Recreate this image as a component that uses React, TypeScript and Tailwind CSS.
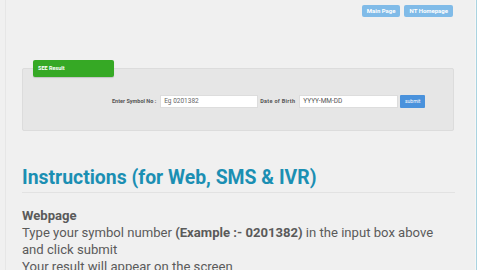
export default function App() {
  return (
    <div className="w-[480px] h-[270px] overflow-hidden bg-[#f0f0f0] flex font-['Roboto',sans-serif]">
      <div className="w-[470px] shrink-0 border-l border-[#e6e6e6] ml-[5px] pl-[16px] pr-[21px]">
        <div className="flex justify-end gap-[4px] pt-[5px] pr-[1px]">
          <span className="h-[12px] px-[5px] rounded-[2px] bg-[#80bbe8] text-white text-[6px] font-bold leading-[12px]">Main Page</span>
          <span className="h-[12px] px-[5px] rounded-[2px] bg-[#80bbe8] text-white text-[6px] font-bold leading-[12px]">NT Homepage</span>
        </div>

        <div className="relative mt-[51px] h-[63px] bg-[#e6e6e6] border border-[#dcdcdc] rounded-[2px]">
          <div className="absolute left-[10px] top-[-9px] w-[81px] h-[17px] bg-[#36a925] rounded-[2px] text-white text-[5.5px] font-bold leading-[17px] pl-[5px] shadow-[0_1px_1px_rgba(0,0,0,0.15)]">
            SEE Result
          </div>
          <div className="flex items-center mt-[26px] pl-[89px] text-[5.5px] text-[#555]">
            <span className="font-bold mr-[4px]">Enter Symbol No :</span>
            <div className="w-[98px] h-[13px] bg-white border border-[#ddd] text-[6.5px] text-[#666] leading-[11px] pl-[3px]">Eg 0201382</div>
            <span className="font-bold ml-[2px] w-[39px] tracking-[0.3px]">Date of Birth</span>
            <div className="w-[99px] h-[13px] bg-white border border-[#ddd] text-[6.5px] text-[#555] leading-[11px] pl-[3px]">YYYY-MM-DD</div>
            <span className="ml-[2px] w-[25px] h-[13px] bg-[#4a92dc] rounded-[1px] text-white text-[5px] leading-[13px] text-center">submit</span>
          </div>
        </div>

        <div className="mt-[35px] pb-[2px] border-b border-[#e2e2e2] mr-[-1px]">
          <h1 className="text-[19.4px] font-bold text-[#1b8fb3] leading-[24px]">Instructions (for Web, SMS &amp; IVR)</h1>
        </div>

        <div className="mt-[14px] text-[13.1px] leading-[17px] text-[#5a5a5a]">
          <div className="font-bold">Webpage</div>
          <div>
            Type your symbol number <span className="font-bold">(Example :- 0201382)</span> in the input box above and click submit
          </div>
          <div>Your result will appear on the screen</div>
        </div>
      </div>
      <div className="w-[1px] shrink-0 bg-[#f6f6f6]"></div>
      <div className="flex-1 border-l border-[#a9d3e0] bg-white"></div>
    </div>
  );
}
